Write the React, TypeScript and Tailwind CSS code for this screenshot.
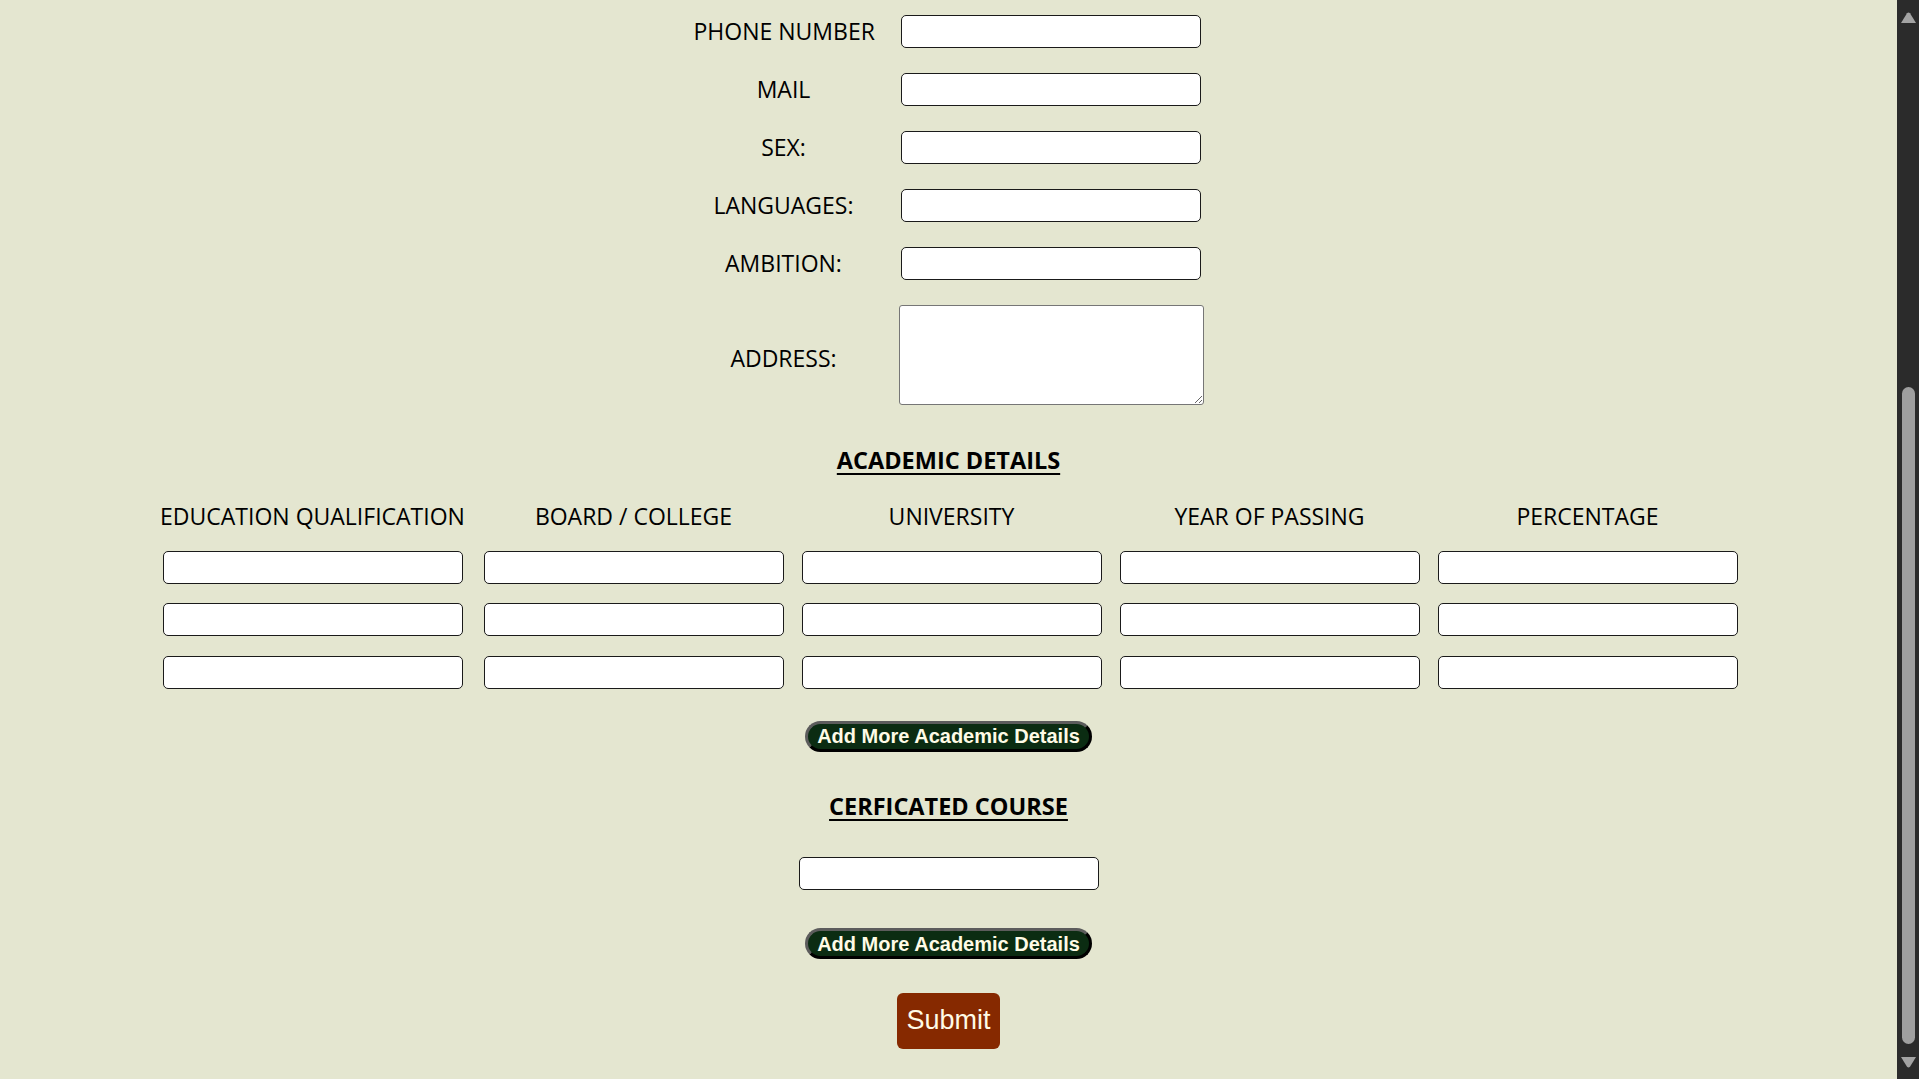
import { useState } from "react";

const personalFields = ["PHONE NUMBER", "MAIL", "SEX:", "LANGUAGES:", "AMBITION:"];

const academicHeaders = [
  "EDUCATION QUALIFICATION",
  "BOARD / COLLEGE",
  "UNIVERSITY",
  "YEAR OF PASSING",
  "PERCENTAGE",
];

const inputClass =
  "h-[33px] w-[300px] rounded-[5px] border border-[#1a1a1a] bg-white px-2 text-[16px] outline-none";

function AddMoreButton({ onClick }: { onClick?: () => void }) {
  return (
    <button
      type="button"
      onClick={onClick}
      className="flex h-[31px] w-[287px] items-center justify-center rounded-full border-[3px] border-t-[#5c5c5c] border-l-[#5c5c5c] border-r-black border-b-black bg-[#0b2c12] font-['Liberation_Sans',Arial,sans-serif] text-[20px] font-bold leading-none text-[#fffbe6]"
    >
      Add More Academic Details
    </button>
  );
}

function Scrollbar() {
  return (
    <div className="flex h-screen w-[22px] shrink-0 flex-col items-center bg-[#2b2b2b]">
      <svg width="15" height="11" viewBox="0 0 15 11" className="mt-[12px]">
        <path d="M6 1.2 Q7.5 -0.4 9 1.2 L15 11 L0 11 Z" fill="#a3a3a3" />
      </svg>
      <div className="flex flex-1 flex-col justify-end pb-[13px]">
        <div className="ml-[1px] h-[657px] w-[13px] rounded-full bg-[#9f9f9f]" />
      </div>
      <svg width="15" height="11" viewBox="0 0 15 11" className="mb-[11px]">
        <path d="M0 0 L15 0 L9 9.8 Q7.5 11.4 6 9.8 Z" fill="#a3a3a3" />
      </svg>
    </div>
  );
}

export default function App() {
  const [academicRows, setAcademicRows] = useState(3);
  const [courseRows, setCourseRows] = useState(1);

  return (
    <div className="flex h-screen overflow-hidden bg-[#e4e6d0] font-['Open_Sans',sans-serif] text-black">
      <form
        onSubmit={(e) => e.preventDefault()}
        className="flex flex-1 flex-col items-center pt-[14.5px]"
      >
        {/* personal details */}
        <div className="grid grid-cols-[180px_305px] items-center gap-x-[25px] gap-y-[25px]">
          {personalFields.map((label) => (
            <div key={label} className="contents">
              <label className="whitespace-nowrap text-center text-[23px] leading-[30px]">
                {label}
              </label>
              <input type="text" className={`${inputClass} justify-self-center`} />
            </div>
          ))}
          <label className="whitespace-nowrap pt-[6px] text-center text-[23px] leading-[30px]">
            ADDRESS:
          </label>
          <textarea className="h-[100px] w-[305px] rounded-[3px] border border-[#767676] bg-white p-1 text-[16px] outline-none" />
        </div>

        {/* academic details */}
        <h2 className="mt-[40px] text-[23.5px] font-bold leading-[30px] underline decoration-2 underline-offset-[4px]">
          ACADEMIC DETAILS
        </h2>
        <div className="mt-[26.5px] grid grid-cols-[324px_318px_318px_318px_318px] items-center gap-y-[19.5px]">
          {academicHeaders.map((h) => (
            <div
              key={h}
              className="whitespace-nowrap text-center text-[23px] leading-[30px]"
            >
              {h}
            </div>
          ))}
          {Array.from({ length: academicRows * 5 }).map((_, idx) => (
            <input key={idx} type="text" className={`${inputClass} justify-self-center`} />
          ))}
        </div>
        <div className="mt-[32px]">
          <AddMoreButton onClick={() => setAcademicRows(academicRows + 1)} />
        </div>

        {/* certificated course */}
        <h2 className="mt-[39.5px] text-[23.5px] font-bold leading-[30px] underline decoration-2 underline-offset-[4px]">
          CERFICATED COURSE
        </h2>
        <div className="mt-[35.5px] flex flex-col gap-[19.5px]">
          {Array.from({ length: courseRows }).map((_, idx) => (
            <input key={idx} type="text" className={inputClass} />
          ))}
        </div>
        <div className="mt-[38.5px]">
          <AddMoreButton onClick={() => setCourseRows(courseRows + 1)} />
        </div>

        <button
          type="submit"
          className="mt-[33.5px] h-[56px] w-[103px] rounded-[6px] bg-[#862900] font-['Liberation_Sans',Arial,sans-serif] text-[27px] text-[#fffbe6]"
        >
          Submit
        </button>
      </form>
      <Scrollbar />
    </div>
  );
}
